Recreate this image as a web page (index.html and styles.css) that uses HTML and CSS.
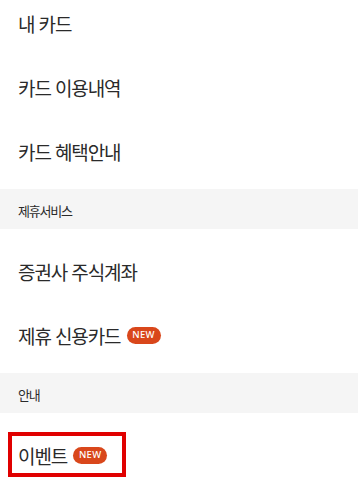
FILE: index.html
```html
<!DOCTYPE html>
<html lang="ko">
<head>
<meta charset="utf-8">
<link rel="stylesheet" href="styles.css">
</head>
<body>
<div class="page">
  <ul class="section first">
    <li class="row"><span class="label">내 카드</span></li>
    <li class="row"><span class="label">카드 이용내역</span></li>
    <li class="row"><span class="label">카드 혜택안내</span></li>
  </ul>
  <div class="band"><span class="band-title">제휴서비스</span></div>
  <ul class="section">
    <li class="row"><span class="label">증권사 주식계좌</span></li>
    <li class="row"><span class="label">제휴 신용카드</span><span class="badge">NEW</span></li>
  </ul>
  <div class="band"><span class="band-title">안내</span></div>
  <ul class="section">
    <li class="row event"><span class="label">이벤트</span><span class="badge">NEW</span><span class="highlight"></span></li>
  </ul>
</div>
</body>
</html>
```

FILE: styles.css
```css
html, body {
  margin: 0;
  padding: 0;
  background: #ffffff;
  overflow: hidden;
}
body {
  font-family: "Noto Sans CJK KR", "Noto Sans", sans-serif;
  color: #2a2a2a;
}
.page {
  width: 358px;
  display: flex;
  flex-direction: column;
}
.section {
  list-style: none;
  margin: 0;
  padding: 10px 0 6px 0;
}
.section.first {
  margin-top: -19px;
}
.row {
  position: relative;
  height: 64px;
  display: flex;
  align-items: center;
  padding-left: 18px;
  gap: 6px;
}
.label {
  font-size: 19px;
  letter-spacing: -1.1px;
  line-height: 1;
  color: #2a2a2a;
}
.band {
  height: 40px;
  background: #f5f5f5;
  display: flex;
  align-items: center;
  padding-left: 18px;
  padding-top: 2px;
  box-sizing: border-box;
}
.band-title {
  font-size: 13px;
  letter-spacing: -1.2px;
  line-height: 1;
  color: #2a2a2a;
}
.badge {
  display: inline-flex;
  align-items: center;
  justify-content: center;
  width: 34px;
  height: 17px;
  border-radius: 9px;
  background: #d9471b;
  color: #ffffff;
  font-family: "Noto Sans", sans-serif;
  font-size: 9.5px;
  font-weight: 500;
  letter-spacing: 0.3px;
  line-height: 1;
}
.highlight {
  position: absolute;
  left: 8px;
  top: 9px;
  width: 118px;
  height: 45px;
  box-sizing: border-box;
  border: 4px solid #e00000;
}
```
